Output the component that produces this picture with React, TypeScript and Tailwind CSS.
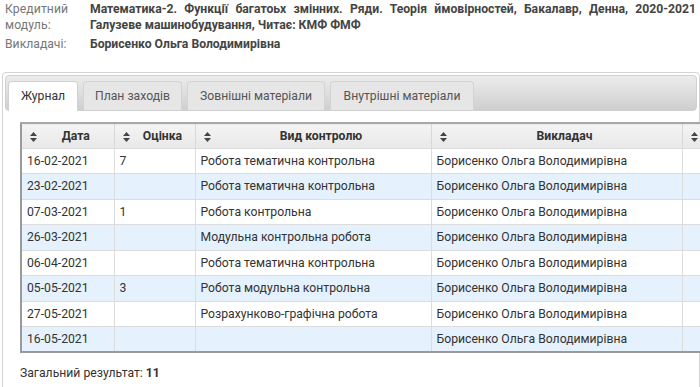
import React from "react";

const rows = [
  ["16-02-2021", "7", "Робота тематична контрольна", "Борисенко Ольга Володимирівна"],
  ["23-02-2021", "", "Робота тематична контрольна", "Борисенко Ольга Володимирівна"],
  ["07-03-2021", "1", "Робота контрольна", "Борисенко Ольга Володимирівна"],
  ["26-03-2021", "", "Модульна контрольна робота", "Борисенко Ольга Володимирівна"],
  ["06-04-2021", "", "Робота тематична контрольна", "Борисенко Ольга Володимирівна"],
  ["05-05-2021", "3", "Робота модульна контрольна", "Борисенко Ольга Володимирівна"],
  ["27-05-2021", "", "Розрахунково-графічна робота", "Борисенко Ольга Володимирівна"],
  ["16-05-2021", "", "", "Борисенко Ольга Володимирівна"],
];

function SortIcon() {
  return (
    <svg width="7" height="10" viewBox="0 0 7 10" className="absolute left-[8px] top-[8px]">
      <path d="M3.5 0 L7 4 L0 4 Z" fill="#444" />
      <path d="M3.5 10 L7 6 L0 6 Z" fill="#444" />
    </svg>
  );
}

const cols = ["w-[93px]", "w-[81px]", "w-[236px]", "w-[251px]", "w-[60px]"];

export default function App() {
  return (
    <div
      className="w-[700px] h-[387px] overflow-hidden bg-white text-[12.2px] text-[#333]"
      style={{ fontFamily: "Roboto, 'Noto Sans', sans-serif" }}
    >
      <div className="pt-[1px] pl-[5px] pr-[4px]">
        <div className="flex">
          <div className="w-[85px] text-[#777] leading-[16px] tracking-[0.1px]">Кредитний<br />модуль:</div>
          <div className="w-[606px] font-bold text-[#444] leading-[16px] text-justify">
            Математика-2. Функції багатоьх змінних. Ряди. Теорія ймовірностей, Бакалавр, Денна, 2020-2021 Галузеве машинобудування, Читає: КМФ ФМФ
          </div>
        </div>
        <div className="flex mt-[3px]">
          <div className="w-[85px] text-[#777] leading-[16px]">Викладачі:</div>
          <div className="font-bold text-[#444] leading-[16px]">Борисенко Ольга Володимирівна</div>
        </div>
      </div>

      <div className="mt-[20px] ml-[2px] border border-[#d4d4d4] rounded-[4px] p-[2px] h-[330px]">
        <div className="h-[36px] rounded-[4px] border border-[#d0d0d0] bg-gradient-to-b from-[#ececec] to-[#cfcfcf] flex items-end pl-[2px] gap-[5px]">
          <div className="h-[30px] mb-[-1px] w-[70px] justify-center flex items-center rounded-t-[4px] border border-[#d0d0d0] border-b-0 bg-white text-[#333]">
            Журнал
          </div>
          <div className="h-[29px] w-[99px] justify-center flex items-center rounded-t-[4px] border border-[#d3d3d3] border-b-0 bg-[#e6e6e6] text-[#555]">
            План заходів
          </div>
          <div className="h-[29px] w-[138px] justify-center flex items-center rounded-t-[4px] border border-[#d3d3d3] border-b-0 bg-[#e6e6e6] text-[#555]">
            Зовнішні матеріали
          </div>
          <div className="h-[29px] w-[144px] justify-center flex items-center rounded-t-[4px] border border-[#d3d3d3] border-b-0 bg-[#e6e6e6] text-[#555]">
            Внутрішні матеріали
          </div>
        </div>

        <div className="pl-[15px] pt-[11px]">
          <table className="border-collapse w-[721px] table-fixed border-l-2 border-b-2 border-l-[#9a9a9a] border-b-[#9a9a9a]">
            <thead>
              <tr className="h-[25px] bg-gradient-to-b from-[#f4f4f4] to-[#e8e8e8] border-t-2 border-t-[#a8a8a8]">
                {["Дата", "Оцінка", "Вид контролю", "Викладач", ""].map((h, i) => (
                  <th
                    key={i}
                    className={`${cols[i]} relative p-0 pl-[20px] pr-[4px] text-center font-bold text-[#333] border-r border-[#d8d8d8]`}
                  >
                    <SortIcon />
                    {h}
                  </th>
                ))}
              </tr>
            </thead>
            <tbody>
              {rows.map((r, ri) => (
                <tr
                  key={ri}
                  className={`h-[25.5px] border-t border-[#dcdcdc] ${ri % 2 === 1 ? "bg-[#e5f1fc]" : "bg-white"}`}
                >
                  {[...r, ""].map((c, ci) => (
                    <td key={ci} className="p-0 pl-[5px] border-r border-[#dcdcdc] whitespace-nowrap overflow-hidden">
                      {c}
                    </td>
                  ))}
                </tr>
              ))}
            </tbody>
          </table>
          <div className="mt-[11px] text-[#333]">
            Загальний результат: <span className="font-bold">11</span>
          </div>
        </div>
      </div>
    </div>
  );
}
